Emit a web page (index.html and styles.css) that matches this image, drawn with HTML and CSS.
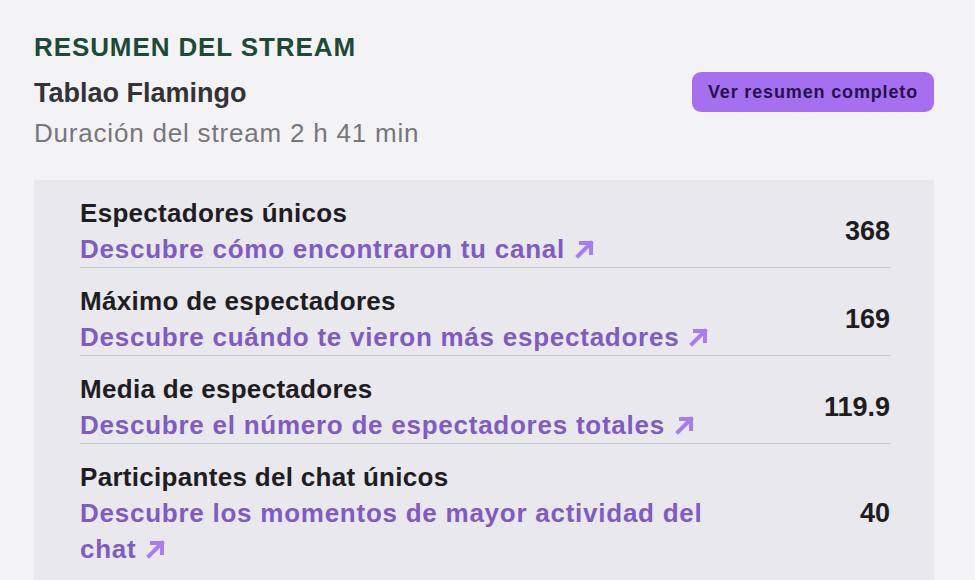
FILE: index.html
```html
<!DOCTYPE html>
<html lang="es">
  <head>
    <meta charset="UTF-8" />
    <meta name="viewport" content="width=device-width, initial-scale=1.0" />
    <title>Resumen del stream</title>
    <link rel="stylesheet" href="styles.css">
  </head>
  <body>
    <div class="summary">
      <h1 class="summary-title">RESUMEN DEL STREAM</h1>

      <div class="stream-head">
        <div class="stream-info">
          <div class="stream-name">Tablao Flamingo</div>
          <div class="stream-duration">Duración del stream 2 h 41 min</div>
        </div>
        <button class="full-summary">Ver resumen completo</button>
      </div>

      <!-- Stats list -->
      <div class="stats">
        <div class="stat-row">
          <div class="stat-text">
            <div class="stat-label">Espectadores únicos</div>
            <a class="stat-link" href="#">Descubre cómo encontraron tu canal<svg class="ext" viewBox="0 0 20 20"><path d="M3 17 L16 4 M6 4 H16 V14" /></svg></a>
          </div>
          <div class="stat-value">368</div>
        </div>

        <div class="stat-row">
          <div class="stat-text">
            <div class="stat-label">Máximo de espectadores</div>
            <a class="stat-link" href="#">Descubre cuándo te vieron más espectadores<svg class="ext" viewBox="0 0 20 20"><path d="M3 17 L16 4 M6 4 H16 V14" /></svg></a>
          </div>
          <div class="stat-value">169</div>
        </div>

        <div class="stat-row">
          <div class="stat-text">
            <div class="stat-label">Media de espectadores</div>
            <a class="stat-link" href="#">Descubre el número de espectadores totales<svg class="ext" viewBox="0 0 20 20"><path d="M3 17 L16 4 M6 4 H16 V14" /></svg></a>
          </div>
          <div class="stat-value">119.9</div>
        </div>

        <div class="stat-row">
          <div class="stat-text">
            <div class="stat-label">Participantes del chat únicos</div>
            <a class="stat-link" href="#">Descubre los momentos de mayor actividad del chat<svg class="ext" viewBox="0 0 20 20"><path d="M3 17 L16 4 M6 4 H16 V14" /></svg></a>
          </div>
          <div class="stat-value">40</div>
        </div>
      </div>
    </div>
  </body>
</html>
```

FILE: styles.css
```css
* {
  box-sizing: border-box;
}
body {
  font-family: "Liberation Sans", Arial, sans-serif;
  background-color: #f3f3f6;
  margin: 0;
  overflow: hidden;
}
.summary {
  padding: 31px 41px 0 34px;
}
.summary-title {
  margin: 0;
  font-size: 26px;
  line-height: 32px;
  font-weight: bold;
  letter-spacing: 0.9px;
  color: #1c4a37;
}
.stream-head {
  display: flex;
  justify-content: space-between;
  align-items: flex-start;
  margin-top: 9px;
}
.stream-name {
  margin-top: 4px;
  font-size: 27px;
  line-height: 34px;
  font-weight: bold;
  color: #333236;
}
.stream-duration {
  margin-top: 5px;
  font-size: 26px;
  line-height: 36px;
  letter-spacing: 0.8px;
  color: #77767c;
}
.full-summary {
  height: 40px;
  padding: 0 16px;
  border: none;
  border-radius: 9px;
  background-color: #a66ff0;
  color: #24124a;
  font-family: inherit;
  font-size: 18px;
  font-weight: bold;
  letter-spacing: 0.85px;
  cursor: pointer;
}
.stats {
  margin-top: 29px;
  padding: 0 44px 14px 46px;
  background-color: #e9e8ed;
}
.stat-row {
  display: flex;
  justify-content: space-between;
  align-items: center;
  padding-top: 15px;
  border-bottom: 1px solid #c7c6cc;
}
.stat-row:last-child {
  border-bottom: none;
}
.stat-text {
  max-width: 660px;
}
.stat-label {
  font-size: 26px;
  line-height: 36px;
  font-weight: bold;
  letter-spacing: 0.3px;
  color: #1e1d22;
}
.stat-link {
  display: block;
  font-size: 26px;
  line-height: 36px;
  font-weight: bold;
  letter-spacing: 0.75px;
  color: #7e5cc2;
  text-decoration: none;
}
.ext {
  width: 20px;
  height: 20px;
  margin-left: 10px;
  vertical-align: -1px;
  fill: none;
  stroke: #a67ef0;
  stroke-width: 4;
  stroke-linecap: square;
}
.stat-value {
  font-size: 27px;
  line-height: 36px;
  font-weight: bold;
  color: #1e1d22;
}
```
